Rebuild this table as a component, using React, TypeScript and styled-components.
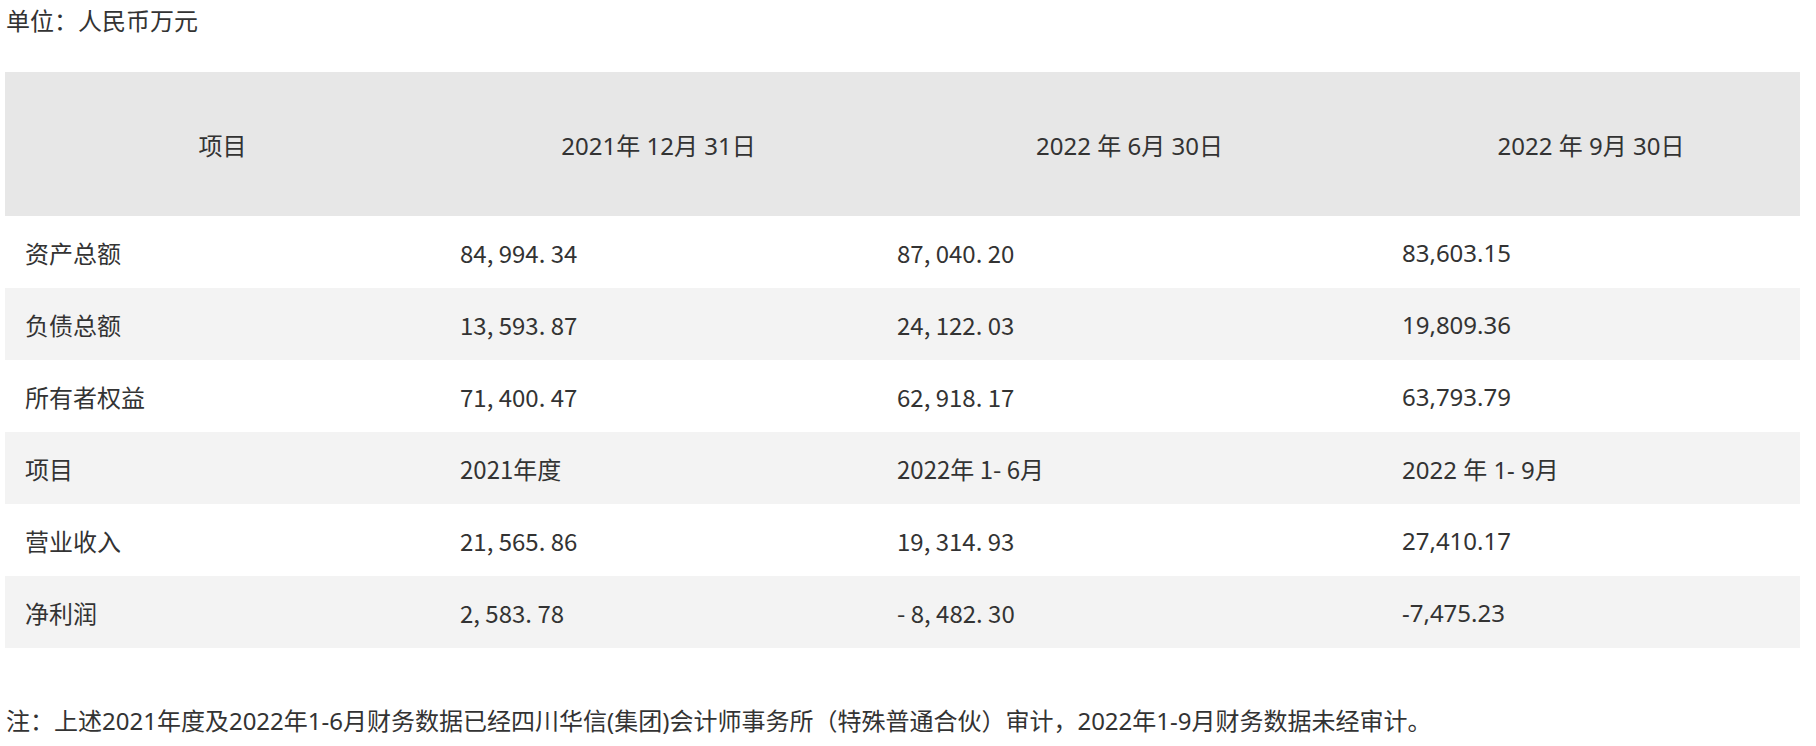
import styled, { createGlobalStyle } from "styled-components";

const GlobalStyle = createGlobalStyle`
    body {
        margin: 0;
        background: #fff;
        font-family: "Noto Sans", "Noto Sans CJK SC", sans-serif;
        color: #333;
    }
`

const Page = styled.div`
    padding: 0 16px 0 5px;
    font-size: 24px;
`
const Unit = styled.p`
    margin: 0;
    line-height: 42px;
    padding-left: 1px;
`
const Table = styled.table`
    width: 100%;
    margin-top: 30px;
    border-collapse: collapse;
    table-layout: fixed;
`
const HeadCell = styled.th<{ w: number }>`
    box-sizing: border-box;
    width: ${p => p.w}px;
    height: 144px;
    padding: 0 20px;
    background: #e7e7e7;
    font-weight: normal;
    text-align: center;
    white-space: nowrap;
`
const Row = styled.tr<{ striped?: boolean }>`
    height: 72px;
    background: ${p => (p.striped ? "#f3f3f3" : "#fff")};
`
const Cell = styled.td<{ narrow?: boolean }>`
    padding: 0 20px;
    font-family: ${p => (p.narrow ? `"Noto Sans CJK SC", sans-serif` : `"Noto Sans", "Noto Sans CJK SC", sans-serif`)};
    white-space: nowrap;
`
const Note = styled.p`
    margin: 52px 0 0;
    line-height: 42px;
    padding-left: 1px;
`

const widths = [435, 437, 505, 418]
const heads = ["项目", "2021年 12月 31日", "2022 年 6月 30日", "2022 年 9月 30日"]

// 前两个年份列的数字带空格，字形也更窄
const narrow = [false, true, true, false]

const rows: string[][] = [
    ["资产总额", "84, 994. 34", "87, 040. 20", "83,603.15"],
    ["负债总额", "13, 593. 87", "24, 122. 03", "19,809.36"],
    ["所有者权益", "71, 400. 47", "62, 918. 17", "63,793.79"],
    ["项目", "2021年度", "2022年 1- 6月", "2022 年 1- 9月"],
    ["营业收入", "21, 565. 86", "19, 314. 93", "27,410.17"],
    ["净利润", "2, 583. 78", "- 8, 482. 30", "-7,475.23"],
]

export default function App() {
    return (
        <Page>
            <GlobalStyle />
            <Unit>单位：人民币万元</Unit>
            <Table>
                <thead>
                    <tr>
                        {heads.map((h, i) => (
                            <HeadCell key={h} w={widths[i]}>{h}</HeadCell>
                        ))}
                    </tr>
                </thead>
                <tbody>
                    {rows.map((r, i) => (
                        <Row key={i} striped={i % 2 === 1}>
                            {r.map((c, j) => (
                                <Cell key={j} narrow={narrow[j]}>{c}</Cell>
                            ))}
                        </Row>
                    ))}
                </tbody>
            </Table>
            <Note>注：上述2021年度及2022年1-6月财务数据已经四川华信(集团)会计师事务所（特殊普通合伙）审计，2022年1-9月财务数据未经审计。</Note>
        </Page>
    )
}
